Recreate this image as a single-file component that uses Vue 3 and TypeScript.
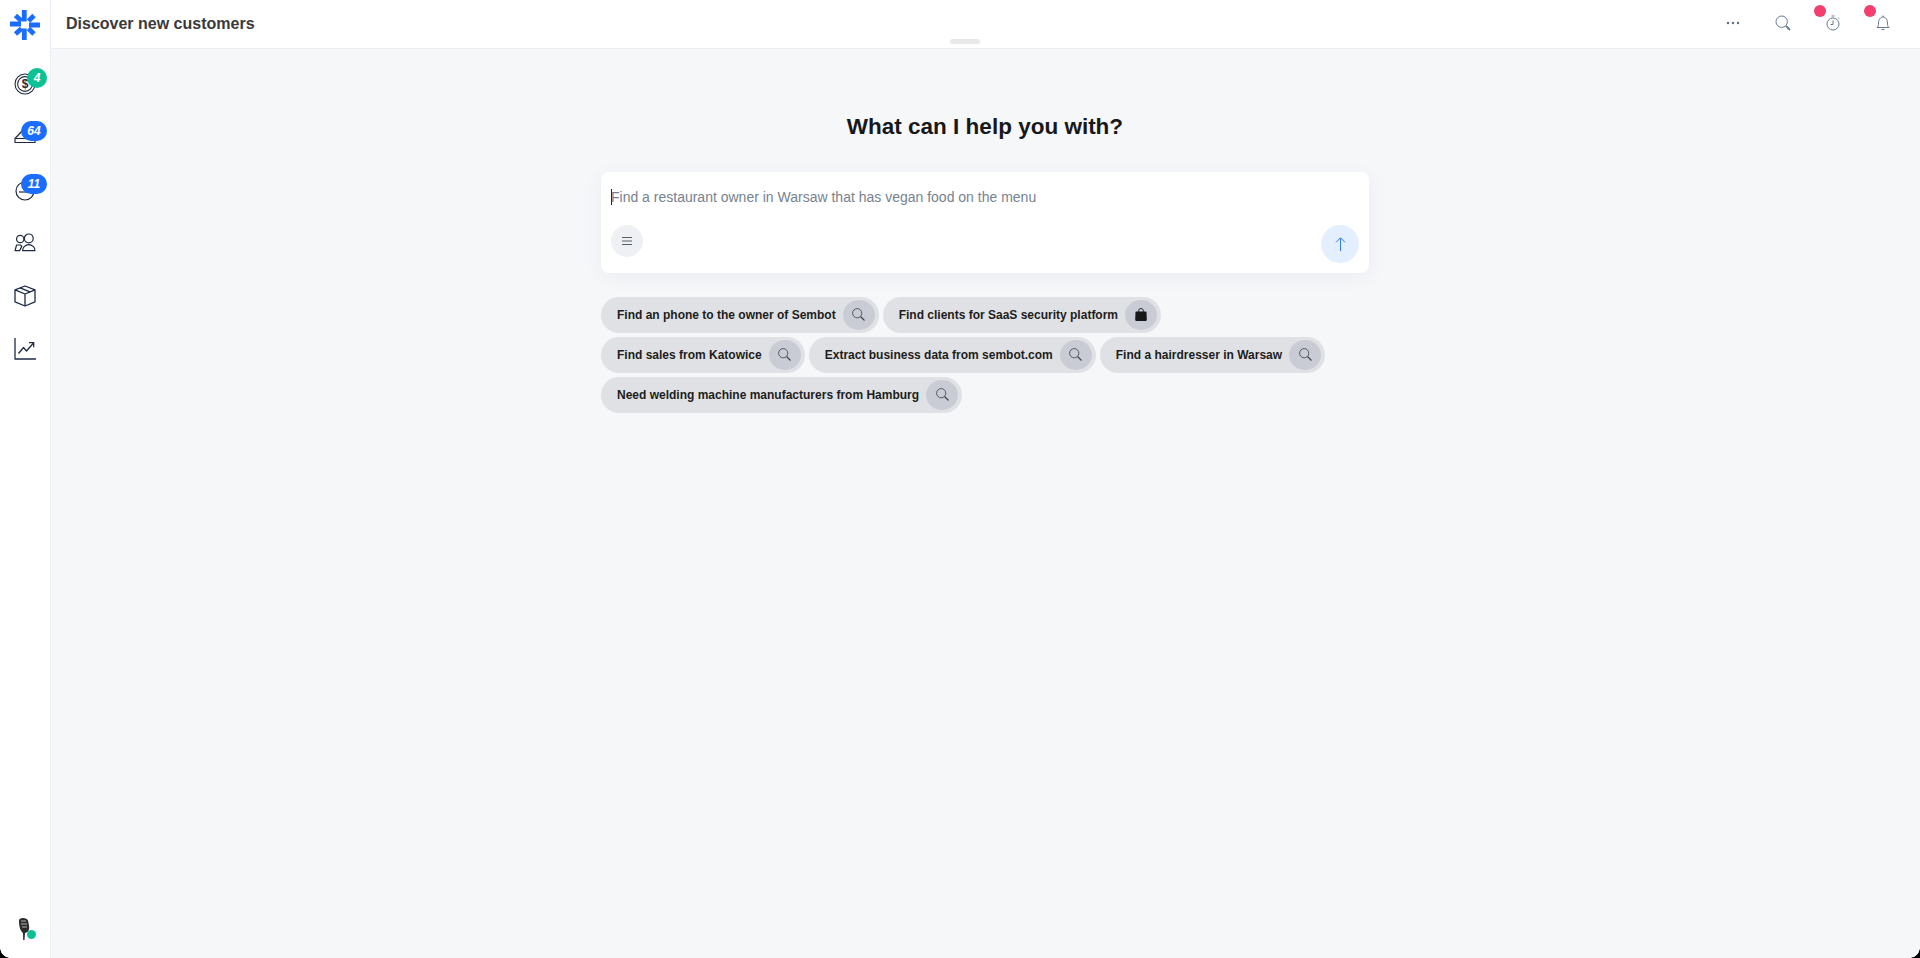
<template>
  <div class="app">
    <aside class="sidebar">
      <div class="logo">
        <svg width="30" height="30" viewBox="0 0 30 30" fill="none" stroke="#1a6dff" stroke-width="4.800">
          <path d="M14.300 0v11.500M14.300 18.500v11.500M0 14h11M19 15h11" />
          <path d="M5.500 5.500l6 5.500M24 5.500l-5.500 5.500M5.500 24l6-5.500M24 24l-5.500-5.500" />
        </svg>
      </div>

      <nav class="nav">
        <div class="nav-item">
          <svg class="nav-icon" viewBox="0 0 22 22" fill="none" stroke="#1e2a44" stroke-width="1.100">
            <circle cx="11" cy="11" r="10" />
            <circle cx="11" cy="11" r="7.400" />
            <text x="11" y="15.200" text-anchor="middle" class="coin">$</text>
          </svg>
          <span class="badge green">4</span>
        </div>
        <div class="nav-item">
          <svg class="nav-icon" viewBox="0 0 22 22" fill="none" stroke="#1e2a44" stroke-width="1.200" stroke-linejoin="round">
            <path d="M1 12.500L9 4h6l6 8.500" />
            <path d="M1 12.500V16.500H21V12.500H1z" />
          </svg>
          <span class="badge blue">64</span>
        </div>
        <div class="nav-item">
          <svg class="nav-icon" viewBox="0 0 22 22" fill="none" stroke="#1e2a44" stroke-width="1.200">
            <circle cx="11" cy="12" r="9" />
            <path d="M5 13h8" />
          </svg>
          <span class="badge blue">11</span>
        </div>
        <div class="nav-item">
          <svg class="nav-icon" viewBox="0 0 22 22" fill="none" stroke="#1e2a44" stroke-width="1.200" stroke-linejoin="round">
            <circle cx="6.200" cy="7" r="3.700" />
            <circle cx="14.800" cy="6.400" r="4.400" />
            <path d="M1 18.600l1.600-5.600h4l1.200 1.400-2.200 4.200z" />
            <path d="M8.600 18.600c0-3.400 2.800-6 6.200-6s6.200 2.600 6.200 6z" />
          </svg>
        </div>
        <div class="nav-item">
          <svg class="nav-icon" viewBox="0 0 22 22" fill="none" stroke="#1e2a44" stroke-width="1.300" stroke-linejoin="round">
            <path d="M11 1l10 3.800v12L11 21 1 16.800v-12z" />
            <path d="M1 4.800L11 9l10-4.200M11 9v12" />
            <path d="M6 2.900l10 4" />
          </svg>
        </div>
        <div class="nav-item">
          <svg class="nav-icon" viewBox="0 0 22 22" fill="none" stroke="#1e2a44" stroke-width="1.300" stroke-linejoin="round">
            <path d="M1 0v21h21" />
            <path d="M4.500 15.500l5-6 3 3.500 7-8" />
            <path d="M15 4.700h4.700v4.500" />
          </svg>
        </div>
      </nav>

      <div class="avatar">
        <svg width="14" height="22" viewBox="0 0 14 22">
          <path d="M2 2.500C2 1 3.500 0 6 0s4.500 1 5 2.500l1 5c0.500 2.500 0 5-1.500 6.500L8 15 7.500 22H6.200L6 15C3.500 13 2 9 2 2.500z" fill="#2b2b2b" />
          <path d="M4 3h5M4 6h6M5 9h5" stroke="#d8d8d8" stroke-width="0.800" />
        </svg>
        <span class="online"></span>
      </div>
    </aside>

    <div class="content">
      <header class="topbar">
        <h1 class="page-title">Discover new customers</h1>
        <div class="grip"></div>
        <div class="actions">
          <button class="action">
            <svg width="16" height="16" viewBox="0 0 16 16" fill="#5b6b80">
              <circle cx="3" cy="8" r="1.200" />
              <circle cx="8" cy="8" r="1.200" />
              <circle cx="13" cy="8" r="1.200" />
            </svg>
          </button>
          <button class="action">
            <svg width="16" height="16" viewBox="0 0 16 16" fill="none" stroke="#66788e" stroke-width="1">
              <circle cx="6.700" cy="6.700" r="5.700" />
              <path d="M11 11l4 4" stroke-width="1.800" />
            </svg>
          </button>
          <button class="action">
            <span class="dot"></span>
            <svg width="16" height="16" viewBox="0 0 16 16" fill="none" stroke="#66788e" stroke-width="1">
              <circle cx="8" cy="9" r="6" />
              <path d="M8 5.500V9.500H5.500M6.500 1h3M13 2.500l1.200 1.200" />
            </svg>
          </button>
          <button class="action">
            <span class="dot"></span>
            <svg width="16" height="16" viewBox="0 0 16 16" fill="none" stroke="#66788e" stroke-width="1">
              <path d="M2 12.500c1.200-1 1.500-2 1.500-4.500C3.500 4.500 5.500 2 8 2s4.500 2.500 4.500 6c0 2.500 0.300 3.500 1.500 4.500z" />
              <path d="M8 0.500V2M6.500 14.500h3" />
            </svg>
          </button>
        </div>
      </header>

      <main class="main">
        <h2 class="heading">What can I help you with?</h2>

        <div class="prompt">
          <div class="prompt-text"><span class="caret"></span>Find a restaurant owner in Warsaw that has vegan food on the menu</div>
          <div class="prompt-tools">
            <button class="menu-btn">
              <svg width="10" height="8" viewBox="0 0 10 8" stroke="#555d66" stroke-width="1">
                <path d="M0 0.500h10M0 4h10M0 7.500h10" />
              </svg>
            </button>
            <button class="send-btn">
              <svg width="11" height="14" viewBox="0 0 11 14" fill="none" stroke="#2f7bf6" stroke-width="1">
                <path d="M5.500 14V1M1 5.300L5.500 0.800 10 5.300" />
              </svg>
            </button>
          </div>
        </div>

        <div class="suggestions">
          <div v-for="chip in chips" :key="chip.label" class="chip">
            <span class="chip-label">{{ chip.label }}</span>
            <span class="chip-icon">
              <svg v-if="chip.icon === 'search'" class="chip-glyph" width="13" height="13" viewBox="0 0 13 13" fill="none" stroke="#3a3f48" stroke-width="0.800">
                <circle cx="5.200" cy="5.200" r="4.600" />
                <path d="M8.500 8.500l4 4" stroke-width="1.100" />
              </svg>
              <svg v-else class="chip-glyph" width="12" height="13" viewBox="0 0 12 13" fill="#17181a">
                <path d="M1.300 3.500h9.400c0.500 0 0.800 0.300 0.800 0.800l0.300 7.500c0 0.700-0.400 1.200-1 1.200H1.200c-0.600 0-1-0.500-1-1.200l0.300-7.500c0-0.500 0.300-0.800 0.800-0.800z" />
                <path d="M3.800 4V2.500C3.800 1.300 4.700 0.500 6 0.500s2.200 0.800 2.200 2V4" fill="none" stroke="#17181a" stroke-width="1" />
              </svg>
            </span>
          </div>
        </div>
      </main>
    </div>

    <!-- window corners of the screenshot -->
    <span class="corner left"></span>
    <span class="corner right"></span>
  </div>
</template>

<script setup lang="ts">
interface Chip {
  label: string;
  icon: "search" | "bag";
}

const chips: Chip[] = [
  { label: "Find an phone to the owner of Sembot", icon: "search" },
  { label: "Find clients for SaaS security platform", icon: "bag" },
  { label: "Find sales from Katowice", icon: "search" },
  { label: "Extract business data from sembot.com", icon: "search" },
  { label: "Find a hairdresser in Warsaw", icon: "search" },
  { label: "Need welding machine manufacturers from Hamburg", icon: "search" },
];
</script>

<style>
html,
body {
  margin: 0;
  height: 100%;
  overflow: hidden;
}
</style>

<style scoped>
.app {
  position: relative;
  display: flex;
  height: 100vh;
  font-family: "Liberation Sans", Arial, sans-serif;
  background: #f6f7f9;
  color: #17181a;
}

.sidebar {
  flex: 0 0 50px;
  display: flex;
  flex-direction: column;
  align-items: center;
  background: #fff;
  border-right: 1px solid #eceef5;
}

.logo {
  display: flex;
  margin-top: 10px;
  height: 30px;
}

.nav {
  display: flex;
  flex-direction: column;
  margin-top: 33px;
  gap: 31px;
  flex: 1;
}

.nav-item {
  position: relative;
  width: 22px;
  height: 22px;
}

.nav-icon {
  display: block;
  width: 22px;
  height: 22px;
}

.coin {
  font-family: "Liberation Sans", sans-serif;
  font-size: 12px;
  font-weight: 700;
  fill: #1e2a44;
  stroke: none;
}

.badge {
  position: absolute;
  top: -5px;
  right: -11px;
  height: 20px;
  min-width: 20px;
  padding: 0 3px;
  box-sizing: border-box;
  border-radius: 10px;
  color: #fff;
  font-size: 12px;
  font-style: italic;
  font-weight: 700;
  line-height: 20px;
  text-align: center;
}

.badge.green {
  background: #0cc295;
}

.badge.blue {
  min-width: 26px;
  background: #1a6dff;
}

.avatar {
  position: relative;
  display: flex;
  margin-bottom: 18px;
  margin-right: 2px;
}

.online {
  position: absolute;
  right: -5px;
  bottom: 1px;
  width: 9px;
  height: 9px;
  border-radius: 50%;
  background: #0cc295;
}

.corner {
  position: absolute;
  bottom: 0;
  width: 10px;
  height: 10px;
}

.corner.left {
  left: 0;
  background: radial-gradient(circle at 100% 0, transparent 9.500px, #000 10px);
}

.corner.right {
  right: 0;
  background: radial-gradient(circle at 0 0, transparent 9.500px, #000 10px);
}

.content {
  flex: 1;
  min-width: 0;
  display: flex;
  flex-direction: column;
}

.topbar {
  position: relative;
  flex: 0 0 48px;
  display: flex;
  align-items: center;
  justify-content: space-between;
  padding: 0 29px 0 15px;
  background: #fff;
  border-bottom: 1px solid #eceef5;
}

.page-title {
  margin: 0;
  color: #3a3a3a;
  font-size: 16px;
  font-weight: 700;
}

.grip {
  position: absolute;
  left: 899px;
  bottom: 4px;
  width: 30px;
  height: 5px;
  border-radius: 3px;
  background: #e8e8e8;
}

.actions {
  display: flex;
  gap: 34px;
  padding-bottom: 2px;
}

.action {
  position: relative;
  display: flex;
  padding: 0;
  border: 0;
  background: none;
}

.dot {
  position: absolute;
  top: -10px;
  left: -11px;
  width: 12px;
  height: 12px;
  border-radius: 50%;
  background: #f43f6e;
}

.main {
  flex: 1;
  display: flex;
  flex-direction: column;
  align-items: center;
  padding-right: 1px;
}

.heading {
  margin: 64px 0 0;
  font-size: 22.500px;
  font-weight: 700;
  line-height: 28px;
  color: #17181a;
}

.prompt {
  box-sizing: border-box;
  width: 768px;
  height: 101px;
  margin-top: 31px;
  padding: 17px 10px 10px;
  background: #fff;
  border-radius: 8px;
  box-shadow: 0 4px 20px rgba(30, 40, 70, 0.05);
  display: flex;
  flex-direction: column;
}

.prompt-text {
  position: relative;
  color: #76828f;
  font-size: 14px;
  line-height: 17px;
}

.caret {
  position: absolute;
  left: 0;
  top: 0;
  width: 1px;
  height: 16px;
  background: #1e2a44;
}

.prompt-tools {
  display: flex;
  justify-content: space-between;
  align-items: flex-start;
  margin-top: 19px;
}

.menu-btn,
.send-btn {
  display: flex;
  align-items: center;
  justify-content: center;
  padding: 0;
  border: 0;
  border-radius: 50%;
}

.menu-btn {
  width: 32px;
  height: 32px;
  background: #eef0f3;
}

.send-btn {
  width: 38px;
  height: 38px;
  background: #e3efff;
}

.suggestions {
  box-sizing: border-box;
  width: 768px;
  margin-top: 24px;
  padding-right: 16px;
  display: flex;
  flex-wrap: wrap;
  gap: 4px;
}

.chip {
  display: flex;
  align-items: center;
  height: 36px;
  padding: 0 4px 0 16px;
  border-radius: 18px;
  background: #e0e1e5;
  box-sizing: border-box;
}

.chip-label {
  font-size: 12px;
  font-weight: 700;
  color: #1c1d20;
  white-space: nowrap;
}

.chip-icon {
  display: flex;
  align-items: center;
  justify-content: center;
  width: 32px;
  height: 30px;
  margin-left: 7px;
  border-radius: 50%;
  background: #c9ccd4;
}

.chip-glyph {
  margin-bottom: 2px;
}
</style>
